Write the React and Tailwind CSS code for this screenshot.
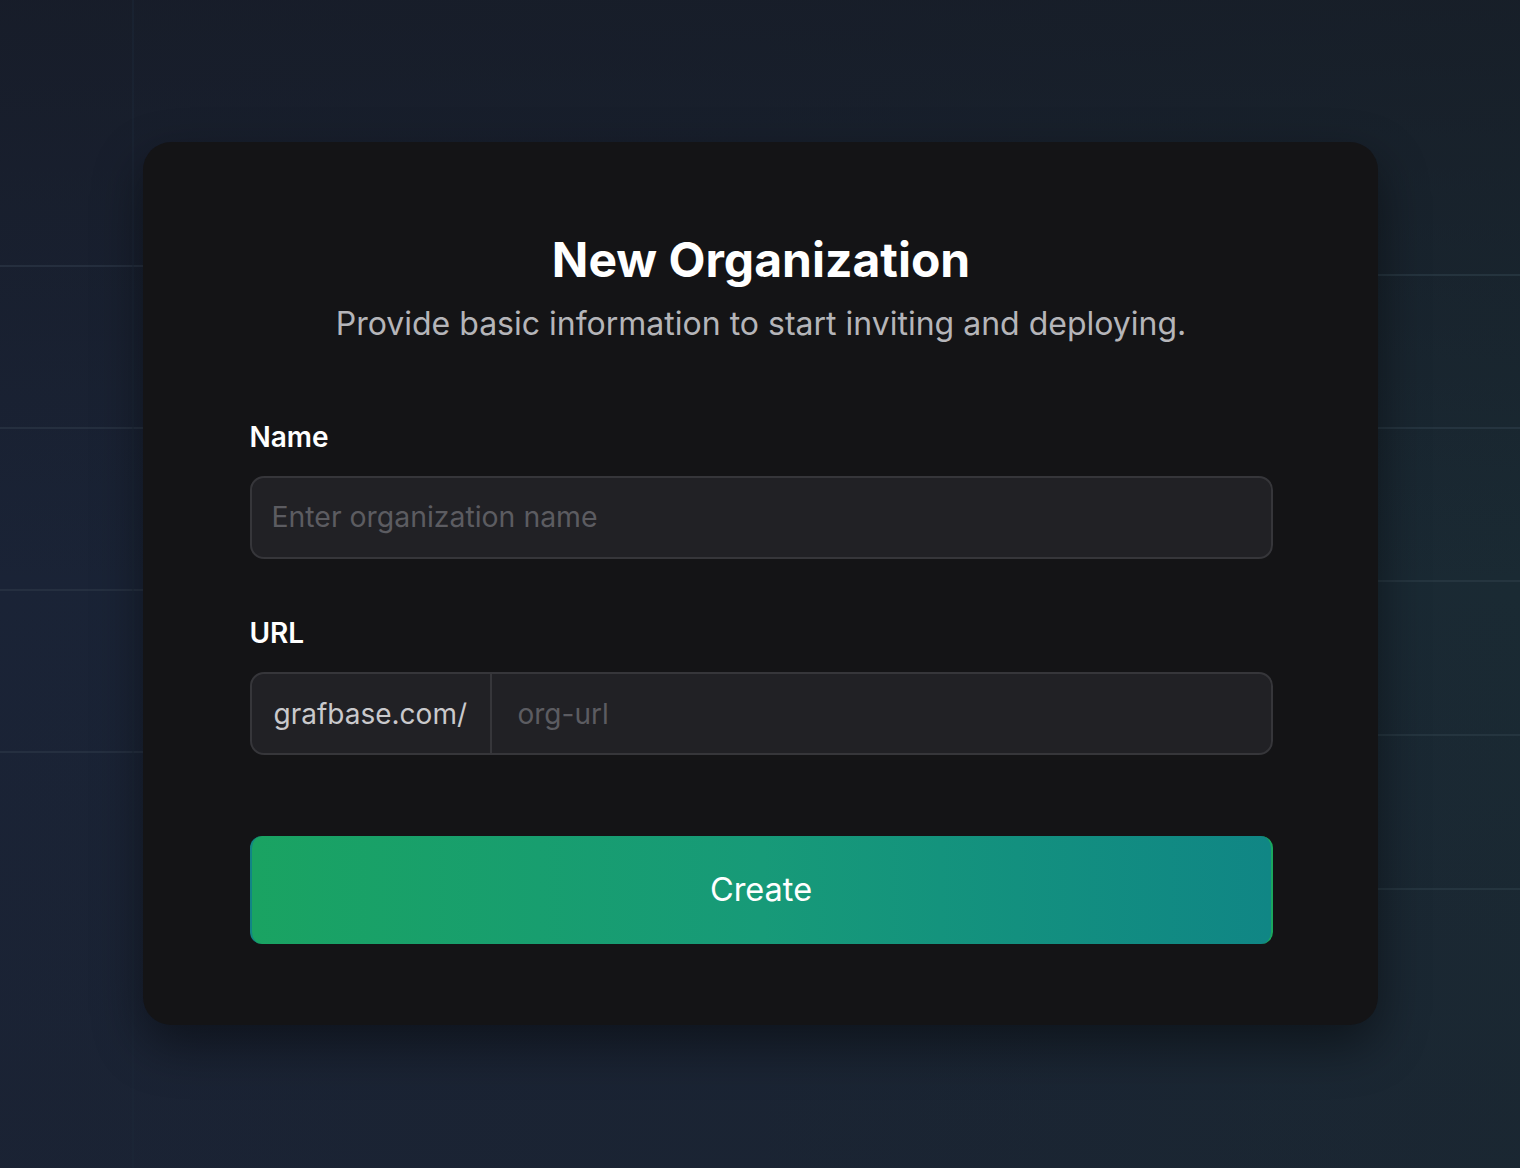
import React from 'react';

function GridLines() {
  // faint grid behind the card
  const left = [266, 428, 590, 752];
  const right = [275, 428, 581, 735, 889];
  return (
    <svg className="absolute inset-0 h-full w-full" width="1520" height="1168">
      {left.map((y) => (
        <line key={'l' + y} x1="0" y1={y} x2="160" y2={y} stroke="#2a3444" strokeWidth="1.5" />
      ))}
      {right.map((y) => (
        <line key={'r' + y} x1="1360" y1={y} x2="1520" y2={y} stroke="#2a3a44" strokeWidth="1.5" />
      ))}
      <line x1="133" y1="0" x2="133" y2="1168" stroke="#1d2838" strokeWidth="1" />
    </svg>
  );
}

export default function App() {
  return (
    <div
      className="relative min-h-screen w-full overflow-hidden bg-gradient-to-r from-[#1a2336] via-[#1a2535] to-[#1a2a33]"
      style={{ fontFamily: 'Inter, "Noto Sans", sans-serif' }}
    >
      <div className="absolute inset-0 bg-gradient-to-b from-[#161a24]/70 via-transparent to-[#1b2230]/40" />
      <GridLines />
      <div className="relative flex min-h-screen justify-center pt-[142px]">
        <div className="h-[883px] w-[1235px] rounded-[28px] bg-[#141416] pl-[107px] pr-[105px] pt-[90px] shadow-[0_20px_50px_rgba(0,0,0,0.45)]">
          <div className="flex flex-col items-center">
            <h1 className="text-[48px] font-bold leading-[56px] text-white">New Organization</h1>
            <p className="mt-[16px] text-[32px] leading-[40px] text-[#b5b5b9]">
              Provide basic information to start inviting and deploying.
            </p>
          </div>

          <div className="mt-[76px]">
            <label className="block text-[28px] font-semibold leading-[34px] text-white">Name</label>
            <div className="mt-[22px] flex h-[83px] items-center rounded-[14px] border-2 border-[#36363a] bg-[#212125] px-[20px]">
              <span className="text-[28.4px] text-[#5c5c61]">Enter organization name</span>
            </div>
          </div>

          <div className="mt-[57px]">
            <label className="block text-[28px] font-semibold leading-[34px] text-white">URL</label>
            <div className="mt-[22px] flex h-[83px] items-stretch rounded-[14px] border-2 border-[#36363a] bg-[#212125]">
              <div className="flex w-[240px] items-center border-r-2 border-[#36363a] pl-[22px]">
                <span className="text-[28px] text-[#c9c9cc]">grafbase.com/</span>
              </div>
              <div className="flex items-center pl-[26px]">
                <span className="text-[28px] text-[#5c5c61]">org-url</span>
              </div>
            </div>
          </div>

          <button className="mt-[81px] flex h-[108px] w-full items-center justify-center rounded-[12px] border-l-2 border-r-2 border-l-[#118585] border-r-[#1aa85e] bg-gradient-to-r from-[#1aa362] via-[#179a78] to-[#108685] text-[32.5px] text-white">
            Create
          </button>
        </div>
      </div>
    </div>
  );
}
